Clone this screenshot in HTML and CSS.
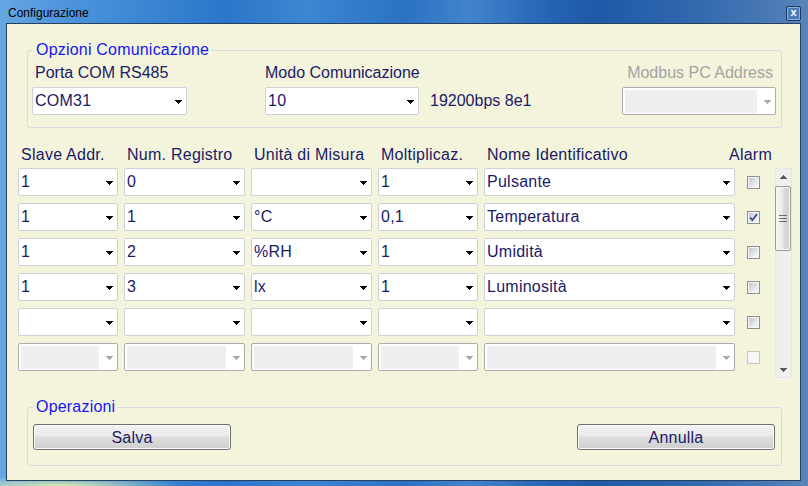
FILE: index.html
```html
<!DOCTYPE html>
<html lang="it">
<head>
<meta charset="utf-8">
<title>Configurazione</title>
<link rel="stylesheet" href="styles.css">
</head>
<body>
<div class="window">
  <div class="titlebar">
    <span class="title">Configurazione</span>
    <span class="close">x</span>
  </div>
  <div class="client">
    <fieldset class="group group-com">
      <legend>Opzioni Comunicazione</legend>
      <div class="com-row">
        <div class="field f-porta">
          <div class="lbl">Porta COM RS485</div>
          <div class="combo"><span class="val">COM31</span><svg class="arrow" viewBox="0 0 7 4"><path d="M0 0h7v1h-1v1h-1v1h-1v1h-1v-1h-1v-1h-1v-1h-1z"/></svg></div>
        </div>
        <div class="field f-modo">
          <div class="lbl">Modo Comunicazione</div>
          <div class="modo-line">
            <div class="combo"><span class="val">10</span><svg class="arrow" viewBox="0 0 7 4"><path d="M0 0h7v1h-1v1h-1v1h-1v1h-1v-1h-1v-1h-1v-1h-1z"/></svg></div>
            <span class="baud">19200bps 8e1</span>
          </div>
        </div>
        <div class="field f-modbus">
          <div class="lbl">Modbus PC Address</div>
          <div class="combo disabled"><span class="fill"></span><svg class="arrow" viewBox="0 0 7 4"><path d="M0 0h7v1h-1v1h-1v1h-1v1h-1v-1h-1v-1h-1v-1h-1z"/></svg></div>
        </div>
      </div>
    </fieldset>

    <div class="table">
      <div class="grid thead">
        <div class="th">Slave Addr.</div>
        <div class="th">Num. Registro</div>
        <div class="th">Unità di Misura</div>
        <div class="th">Moltiplicaz.</div>
        <div class="th">Nome Identificativo</div>
        <div class="th alarm">Alarm</div>
      </div>
      <div class="tbody">
        <div class="grid rows">
          <div class="combo"><span class="val">1</span><svg class="arrow" viewBox="0 0 7 4"><path d="M0 0h7v1h-1v1h-1v1h-1v1h-1v-1h-1v-1h-1v-1h-1z"/></svg></div>
          <div class="combo"><span class="val">0</span><svg class="arrow" viewBox="0 0 7 4"><path d="M0 0h7v1h-1v1h-1v1h-1v1h-1v-1h-1v-1h-1v-1h-1z"/></svg></div>
          <div class="combo"><span class="val"></span><svg class="arrow" viewBox="0 0 7 4"><path d="M0 0h7v1h-1v1h-1v1h-1v1h-1v-1h-1v-1h-1v-1h-1z"/></svg></div>
          <div class="combo"><span class="val">1</span><svg class="arrow" viewBox="0 0 7 4"><path d="M0 0h7v1h-1v1h-1v1h-1v1h-1v-1h-1v-1h-1v-1h-1z"/></svg></div>
          <div class="combo"><span class="val">Pulsante</span><svg class="arrow" viewBox="0 0 7 4"><path d="M0 0h7v1h-1v1h-1v1h-1v1h-1v-1h-1v-1h-1v-1h-1z"/></svg></div>
          <div class="cbcell"><span class="cb"><span class="box"></span></span></div>

          <div class="combo"><span class="val">1</span><svg class="arrow" viewBox="0 0 7 4"><path d="M0 0h7v1h-1v1h-1v1h-1v1h-1v-1h-1v-1h-1v-1h-1z"/></svg></div>
          <div class="combo"><span class="val">1</span><svg class="arrow" viewBox="0 0 7 4"><path d="M0 0h7v1h-1v1h-1v1h-1v1h-1v-1h-1v-1h-1v-1h-1z"/></svg></div>
          <div class="combo"><span class="val">°C</span><svg class="arrow" viewBox="0 0 7 4"><path d="M0 0h7v1h-1v1h-1v1h-1v1h-1v-1h-1v-1h-1v-1h-1z"/></svg></div>
          <div class="combo"><span class="val">0,1</span><svg class="arrow" viewBox="0 0 7 4"><path d="M0 0h7v1h-1v1h-1v1h-1v1h-1v-1h-1v-1h-1v-1h-1z"/></svg></div>
          <div class="combo"><span class="val">Temperatura</span><svg class="arrow" viewBox="0 0 7 4"><path d="M0 0h7v1h-1v1h-1v1h-1v1h-1v-1h-1v-1h-1v-1h-1z"/></svg></div>
          <div class="cbcell"><span class="cb checked"><span class="box"><svg viewBox="0 0 9 9"><path d="M1.2 4.6 L3.4 7.2 L7.9 1.2" fill="none" stroke="#2c3f93" stroke-width="1.6"/></svg></span></span></div>

          <div class="combo"><span class="val">1</span><svg class="arrow" viewBox="0 0 7 4"><path d="M0 0h7v1h-1v1h-1v1h-1v1h-1v-1h-1v-1h-1v-1h-1z"/></svg></div>
          <div class="combo"><span class="val">2</span><svg class="arrow" viewBox="0 0 7 4"><path d="M0 0h7v1h-1v1h-1v1h-1v1h-1v-1h-1v-1h-1v-1h-1z"/></svg></div>
          <div class="combo"><span class="val">%RH</span><svg class="arrow" viewBox="0 0 7 4"><path d="M0 0h7v1h-1v1h-1v1h-1v1h-1v-1h-1v-1h-1v-1h-1z"/></svg></div>
          <div class="combo"><span class="val">1</span><svg class="arrow" viewBox="0 0 7 4"><path d="M0 0h7v1h-1v1h-1v1h-1v1h-1v-1h-1v-1h-1v-1h-1z"/></svg></div>
          <div class="combo"><span class="val">Umidità</span><svg class="arrow" viewBox="0 0 7 4"><path d="M0 0h7v1h-1v1h-1v1h-1v1h-1v-1h-1v-1h-1v-1h-1z"/></svg></div>
          <div class="cbcell"><span class="cb"><span class="box"></span></span></div>

          <div class="combo"><span class="val">1</span><svg class="arrow" viewBox="0 0 7 4"><path d="M0 0h7v1h-1v1h-1v1h-1v1h-1v-1h-1v-1h-1v-1h-1z"/></svg></div>
          <div class="combo"><span class="val">3</span><svg class="arrow" viewBox="0 0 7 4"><path d="M0 0h7v1h-1v1h-1v1h-1v1h-1v-1h-1v-1h-1v-1h-1z"/></svg></div>
          <div class="combo"><span class="val">lx</span><svg class="arrow" viewBox="0 0 7 4"><path d="M0 0h7v1h-1v1h-1v1h-1v1h-1v-1h-1v-1h-1v-1h-1z"/></svg></div>
          <div class="combo"><span class="val">1</span><svg class="arrow" viewBox="0 0 7 4"><path d="M0 0h7v1h-1v1h-1v1h-1v1h-1v-1h-1v-1h-1v-1h-1z"/></svg></div>
          <div class="combo"><span class="val">Luminosità</span><svg class="arrow" viewBox="0 0 7 4"><path d="M0 0h7v1h-1v1h-1v1h-1v1h-1v-1h-1v-1h-1v-1h-1z"/></svg></div>
          <div class="cbcell"><span class="cb"><span class="box"></span></span></div>

          <div class="combo"><span class="val"></span><svg class="arrow" viewBox="0 0 7 4"><path d="M0 0h7v1h-1v1h-1v1h-1v1h-1v-1h-1v-1h-1v-1h-1z"/></svg></div>
          <div class="combo"><span class="val"></span><svg class="arrow" viewBox="0 0 7 4"><path d="M0 0h7v1h-1v1h-1v1h-1v1h-1v-1h-1v-1h-1v-1h-1z"/></svg></div>
          <div class="combo"><span class="val"></span><svg class="arrow" viewBox="0 0 7 4"><path d="M0 0h7v1h-1v1h-1v1h-1v1h-1v-1h-1v-1h-1v-1h-1z"/></svg></div>
          <div class="combo"><span class="val"></span><svg class="arrow" viewBox="0 0 7 4"><path d="M0 0h7v1h-1v1h-1v1h-1v1h-1v-1h-1v-1h-1v-1h-1z"/></svg></div>
          <div class="combo"><span class="val"></span><svg class="arrow" viewBox="0 0 7 4"><path d="M0 0h7v1h-1v1h-1v1h-1v1h-1v-1h-1v-1h-1v-1h-1z"/></svg></div>
          <div class="cbcell"><span class="cb"><span class="box"></span></span></div>

          <div class="combo disabled"><span class="fill"></span><svg class="arrow" viewBox="0 0 7 4"><path d="M0 0h7v1h-1v1h-1v1h-1v1h-1v-1h-1v-1h-1v-1h-1z"/></svg></div>
          <div class="combo disabled"><span class="fill"></span><svg class="arrow" viewBox="0 0 7 4"><path d="M0 0h7v1h-1v1h-1v1h-1v1h-1v-1h-1v-1h-1v-1h-1z"/></svg></div>
          <div class="combo disabled"><span class="fill"></span><svg class="arrow" viewBox="0 0 7 4"><path d="M0 0h7v1h-1v1h-1v1h-1v1h-1v-1h-1v-1h-1v-1h-1z"/></svg></div>
          <div class="combo disabled"><span class="fill"></span><svg class="arrow" viewBox="0 0 7 4"><path d="M0 0h7v1h-1v1h-1v1h-1v1h-1v-1h-1v-1h-1v-1h-1z"/></svg></div>
          <div class="combo disabled"><span class="fill"></span><svg class="arrow" viewBox="0 0 7 4"><path d="M0 0h7v1h-1v1h-1v1h-1v1h-1v-1h-1v-1h-1v-1h-1z"/></svg></div>
          <div class="cbcell"><span class="cb disabled"><span class="box"></span></span></div>
        </div>
        <div class="scrollbar">
          <div class="sb-btn"><svg class="sb-arrow" viewBox="0 0 7 4"><path d="M3 0h1v1h1v1h1v1h1v1h-7v-1h1v-1h1v-1h1z"/></svg></div>
          <div class="thumb"><svg class="grip" viewBox="0 0 8 7"><path d="M0 0.5h8M0 3.5h8M0 6.5h8" stroke="#6a6a6a" stroke-width="1"/></svg></div>
          <div class="sb-space"></div>
          <div class="sb-btn"><svg class="sb-arrow" viewBox="0 0 7 4"><path d="M0 0h7v1h-1v1h-1v1h-1v1h-1v-1h-1v-1h-1v-1h-1z"/></svg></div>
        </div>
      </div>
    </div>

    <fieldset class="group group-op">
      <legend>Operazioni</legend>
      <div class="ops">
        <button class="btn" type="button">Salva</button>
        <button class="btn" type="button">Annulla</button>
      </div>
    </fieldset>
  </div>
</div>
</body>
</html>
```
FILE: styles.css
```css
* { box-sizing: border-box; }
html, body { margin: 0; padding: 0; }
body {
  width: 808px;
  height: 486px;
  overflow: hidden;
  font-family: "Liberation Sans", Arial, sans-serif;
}

.window {
  width: 808px;
  height: 486px;
  display: flex;
  flex-direction: column;
  padding: 0 7px 5px 6px;
  background:
    radial-gradient(ellipse 120px 10px at 60px 486px, rgba(235, 245, 170, 0.9), rgba(235, 245, 170, 0) 100%),
    linear-gradient(90deg, #66a6e2 0%, #4d94dc 8%, #3b85d3 18%, #2c76ca 28%, #3d86d2 38%, #2b72c4 50%, #4284cc 58%, #2663b4 68%, #1f59a8 74%, #2d66ad 84%, #4676b4 94%, #5884ba 100%);
}

.titlebar {
  height: 23px;
  flex: none;
  display: flex;
  align-items: flex-start;
  justify-content: space-between;
}
.title {
  font-size: 12px;
  line-height: 14px;
  color: #000;
  margin: 6px 0 0 2px;
}
.close {
  width: 15px;
  height: 15px;
  margin-top: 6px;
  border: 1px solid #1d3a66;
  border-radius: 2px;
  background: #4c7ab4;
  box-shadow: inset 0 0 0 1px #8fb0d8;
  display: flex;
  align-items: center;
  justify-content: center;
  color: #fff;
  font: bold 11px/1 "Liberation Sans", Arial, sans-serif;
  padding-bottom: 2px;
}

.client {
  flex: 1;
  min-height: 0;
  background: #f4f4dc;
  border: 1px solid #26405f;
  display: flex;
  flex-direction: column;
}

.group {
  margin: 17px 18px 0 20px;
  padding: 5px 5px 12px 4px;
  border: 1px solid #d4dbe1;
  border-radius: 3px;
  min-width: 0;
}
.group legend {
  padding: 0 3px;
  margin-left: 1px;
  font-size: 16px;
  line-height: 18px;
  letter-spacing: 0.2px;
  color: #1616f5;
}
.group-op {
  margin-top: 20px;
  padding: 8px 5px 15px 4px;
}

.com-row {
  display: flex;
  align-items: flex-start;
}
.field {
  display: flex;
  flex-direction: column;
  gap: 5px;
}
.lbl {
  font-size: 16px;
  line-height: 18px;
  color: #1a1a66;
  white-space: nowrap;
}
.f-porta { width: 155px; }
.f-porta .lbl { padding-left: 3px; }
.f-modo { margin-left: 78px; }
.f-modo .combo { width: 154px; }
.modo-line {
  display: flex;
  align-items: center;
  gap: 11px;
}
.baud {
  font-size: 16px;
  color: #1a1a66;
  white-space: nowrap;
}
.f-modbus {
  margin-left: auto;
  width: 154px;
}
.f-modbus .lbl {
  text-align: right;
  padding-right: 3px;
  color: #a3a3a3;
}

.combo {
  height: 28px;
  border: 1px solid #cdd2da;
  border-radius: 2px;
  background: #fff;
  display: flex;
  align-items: center;
  font-size: 16px;
  color: #1a1a66;
}
.combo .val {
  flex: 1;
  min-width: 0;
  padding-left: 2px;
  line-height: 26px;
  letter-spacing: 0.25px;
  white-space: nowrap;
  overflow: hidden;
}
.arrow {
  width: 7px;
  height: 4px;
  margin: 2px 4px 0 0;
  flex: none;
  fill: #000;
}
.combo.disabled { border-color: #acacac; }
.combo.disabled .arrow { fill: #a8a8a8; }
.combo .fill {
  flex: 1;
  align-self: stretch;
  margin: 2px 7px 1px 2px;
  background: #efefef;
}

.table {
  margin: 18px 0 0 11px;
}
.grid {
  display: grid;
  grid-template-columns: 100px 121px 121px 100px 251px 19px;
  column-gap: 6px;
}
.thead { margin-bottom: 4px; }
.th {
  font-size: 16px;
  line-height: 18px;
  letter-spacing: 0.25px;
  color: #1a1a66;
  padding-left: 3px;
  white-space: nowrap;
}
.th.alarm {
  padding-left: 0;
  display: flex;
  justify-content: center;
}
.tbody {
  display: flex;
  align-items: flex-start;
}
.rows { row-gap: 7px; }

.cbcell {
  display: flex;
  align-items: center;
  padding-left: 6px;
}
.cb {
  width: 13px;
  height: 13px;
  border: 1px solid #8f8f8f;
  background: #f6f6f6;
  padding: 1px;
  display: block;
}
.cb .box {
  display: block;
  width: 9px;
  height: 9px;
  background: linear-gradient(135deg, #c4c8ce 0%, #e2e4e6 55%, #f7f7f7 100%);
}
.cb .box svg {
  display: block;
  width: 9px;
  height: 9px;
}
.cb.disabled {
  border-color: #c4c4c4;
  background: #f6f6f6;
}
.cb.disabled .box { background: none; }

.scrollbar {
  margin-left: 15px;
  width: 17px;
  height: 210px;
  background: #efefef;
  box-shadow: inset 0 0 0 1px #e6e6e6;
  display: flex;
  flex-direction: column;
}
.sb-btn {
  height: 17px;
  flex: none;
  display: flex;
  align-items: center;
  justify-content: center;
}
.sb-arrow {
  width: 7px;
  height: 4px;
  fill: #5a5a5a;
}
.thumb {
  margin-top: 1px;
  width: 16px;
  height: 65px;
  flex: none;
  border: 1px solid #9b9b9b;
  border-radius: 2px;
  background: linear-gradient(90deg, #f4f4f4 0%, #ebebeb 45%, #dadada 55%, #d0d0d0 100%);
  box-shadow: inset 0 0 0 1px #f8f8f8;
  display: flex;
  align-items: center;
  justify-content: center;
}
.grip {
  width: 8px;
  height: 7px;
}
.sb-space { flex: 1; }

.ops {
  display: flex;
  justify-content: space-between;
  padding: 0 1px;
}
.btn {
  width: 198px;
  height: 26px;
  border: 1px solid #707070;
  border-radius: 3px;
  background: linear-gradient(#f2f2f2 0%, #ebebeb 45%, #dddddd 50%, #cfcfcf 100%);
  box-shadow: inset 0 0 0 1px #fbfbfb;
  font: 16px/25px "Liberation Sans", Arial, sans-serif;
  letter-spacing: 0.2px;
  color: #1a1a66;
  padding: 0;
}
```
